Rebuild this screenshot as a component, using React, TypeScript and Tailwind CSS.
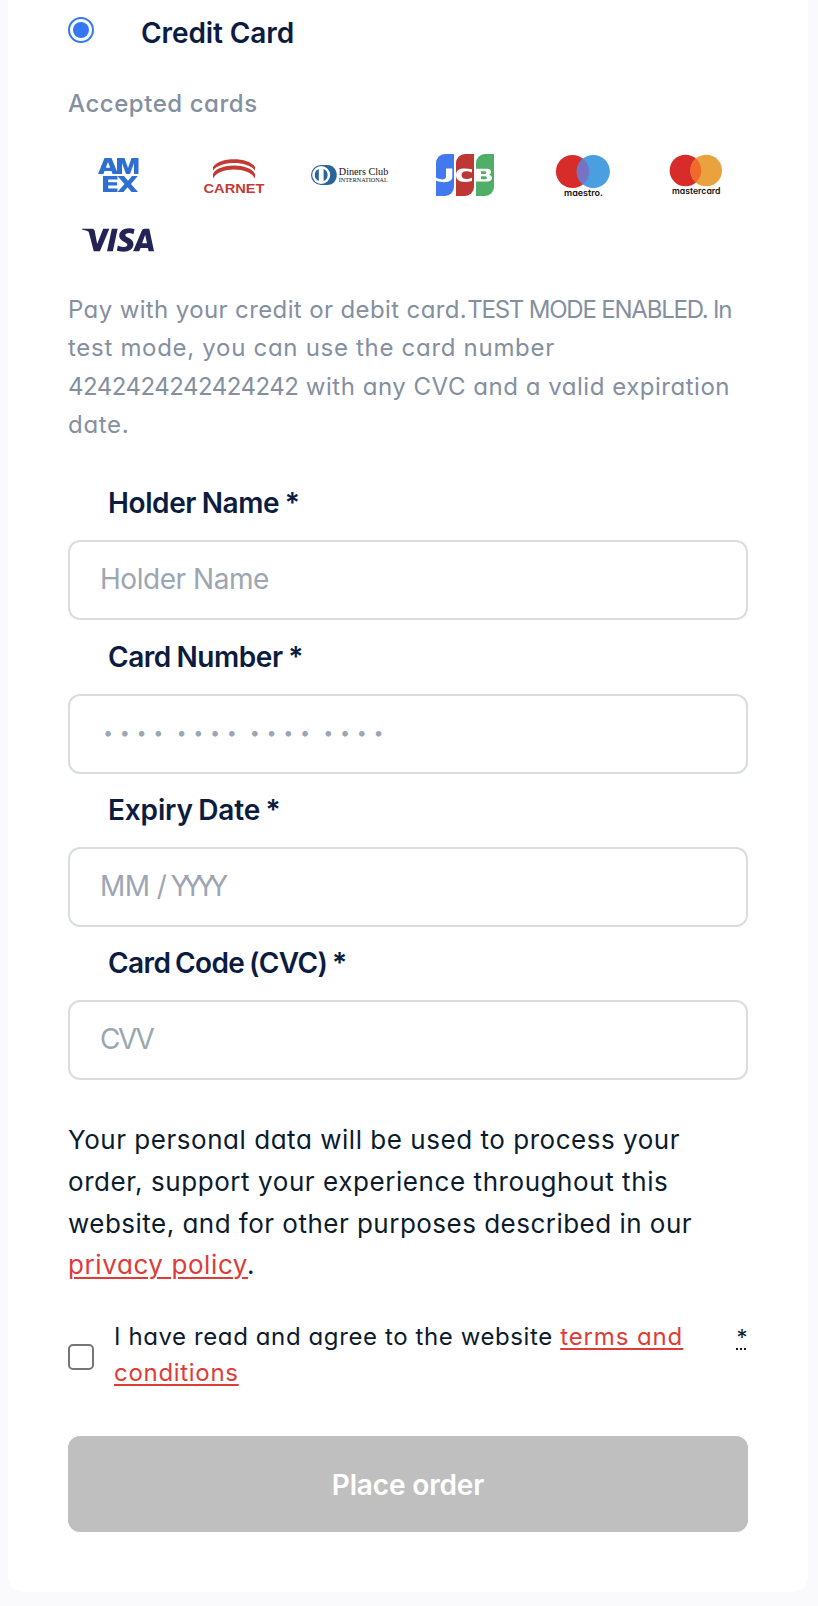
import type { ReactNode } from "react";
import { SiVisa } from "react-icons/si";

function Amex() {
  return (
    <svg viewBox="0 0 100 64" className="h-16 w-full" fill="#2f6fd0">
      <path fillRule="evenodd" d="M30 31 L36.500 15 H43.500 L49 28.500 V15 H56.500 L60 25 L63.500 15 H70.500 V31 H66 V20 L62 31 H58 L54 20 V31 H44.500 L43.500 28 H36.500 L35.500 31Z M37.800 24.800 H42.200 L40 19Z" />
      <path d="M35 33 H49.500 V36.500 H40.200 V39.200 H49 V42.500 H40.200 V45.500 H49.500 V49 H35Z" />
      <path d="M49.500 33 H56 L60 37.800 L64 33 H69.800 L63 41 L70 49 H63.500 L59.500 44.300 L55.500 49 H49.500 L56.500 41Z" />
    </svg>
  );
}

function Carnet() {
  return (
    <svg viewBox="0 0 100 64" className="h-16 w-full font-['Liberation_Sans'] font-bold" fill="#c33a33">
      <path d="M29 27.500 V24 C35 13.500 65 13.500 71 24 V27.500 C64 17.500 36 17.500 29 27.500Z" />
      <path d="M29 35.500 V31 C34 19.500 66 19.500 71 31 V35.500 C65 23.500 35 23.500 29 35.500Z" />
      <text x="19.500" y="50" fontSize="12.600" textLength="61" lengthAdjust="spacingAndGlyphs">CARNET</text>
    </svg>
  );
}

function Diners() {
  return (
    <svg viewBox="0 0 100 64" className="h-16 w-full font-['Liberation_Serif']" fill="#111">
      <path d="M21 22 H27 C40 22 40 42 27 42 H21 A10 10 0 0 1 21 22Z" fill="#2a6499" />
      <circle cx="21.200" cy="32" r="9" fill="#fff" />
      <path d="M18.800 26 V38 A6.500 6.500 0 0 1 18.800 26Z M23.600 26 A6.500 6.500 0 0 1 23.600 38Z" fill="#2a6499" />
      <text x="38.800" y="32.400" fontSize="11" textLength="49.500" lengthAdjust="spacingAndGlyphs">Diners Club</text>
      <text x="38.800" y="38.500" fontSize="6.200" textLength="49" lengthAdjust="spacingAndGlyphs">INTERNATIONAL</text>
    </svg>
  );
}

function Jcb() {
  return (
    <svg viewBox="0 0 100 64" className="h-16 w-full">
      <path d="M29 11 H38 V44 A9 9 0 0 1 29 53 H20 V20 A9 9 0 0 1 29 11Z" fill="#4279ee" />
      <path d="M49 11 H58 V44 A9 9 0 0 1 49 53 H40 V20 A9 9 0 0 1 49 11Z" fill="#bd3734" />
      <path d="M69 11 H78 V44 A9 9 0 0 1 69 53 H60 V20 A9 9 0 0 1 69 11Z" fill="#50af67" />
      <path d="M30 25.500 H36.300 V34 C36.300 40.500 25 39.700 20 37.800 V34.800 C25 36.800 30 37.500 30 33.500Z" fill="#fff" />
      <path d="M56 26.200 V29.500 C50 27 45.500 28 45.500 32 C45.500 36.200 50 37 56 34.700 V38 C47 40 40 39 40 32 C40 25 47 24.500 56 26.200Z" fill="#fff" />
      <path fillRule="evenodd" d="M60 25.700 H71 C76 25.700 76.300 30.700 72.600 31.800 C77.500 32.500 77 38.600 71.500 38.600 H60Z M65 28.200 V30.900 H69 C70.800 30.900 70.800 28.200 69 28.200Z M65 33.200 V36.200 H69.500 C71.500 36.200 71.500 33.200 69.500 33.200Z" fill="#fff" />
    </svg>
  );
}

function Maestro() {
  return (
    <svg viewBox="0 0 100 64" className="h-16 w-full font-['Inter'] font-semibold [font-feature-settings:'cv11']">
      <circle cx="40.500" cy="28.500" r="16.600" fill="#d82c2b" />
      <circle cx="61.300" cy="28.500" r="16.600" fill="#4a9fe0" />
      <path d="M50.900 15.560 A16.600 16.600 0 0 1 50.900 41.440 A16.600 16.600 0 0 1 50.900 15.560Z" fill="#7673c4" />
      <text x="32" y="53.300" fontSize="9" textLength="39" lengthAdjust="spacingAndGlyphs" fill="#111">maestro.</text>
    </svg>
  );
}

function Mastercard() {
  return (
    <svg viewBox="0 0 100 64" className="h-16 w-full font-['Inter'] font-semibold [font-feature-settings:'cv11']">
      <circle cx="37.500" cy="27.500" r="15.800" fill="#d82c2b" />
      <circle cx="58.200" cy="27.500" r="15.800" fill="#eaa23f" />
      <path d="M47.850 15.560 A15.800 15.800 0 0 1 47.850 39.440 A15.800 15.800 0 0 1 47.850 15.560Z" fill="#f06a2c" />
      <text x="24" y="51.300" fontSize="8.400" textLength="48.500" lengthAdjust="spacingAndGlyphs" fill="#111">mastercard</text>
    </svg>
  );
}

function Field({ label, name, tracking, children }: { label: string; name: string; tracking: string; children: ReactNode }) {
  return (
    <div className="flex flex-col pb-[15.33px]">
      <label htmlFor={name} className={`mb-4 pl-10 text-[28px] leading-[42px] font-semibold text-[#0b1c40] ${tracking}`}>
        {label}
      </label>
      <div className="grid h-20">
        <input
          id={name}
          className="[grid-area:1/1] h-20 w-full rounded-xl border-2 border-[#d9dde3] bg-white px-8 text-[28px] text-[#0b1c40] outline-none"
        />
        <span className="pointer-events-none [grid-area:1/1] pl-8 text-[28px] leading-[79px] whitespace-pre text-[#9ca6b3]">{children}</span>
      </div>
    </div>
  );
}

export default function App() {
  return (
    <div className="h-[1606px] overflow-hidden bg-[#fafafc] px-2 pr-[10px] font-['Inter',sans-serif]">
      <main className="flex h-[1592px] flex-col rounded-b-2xl bg-white px-[60px] pt-3">
        <div className="flex h-[42px] shrink-0">
          <span role="radio" aria-checked="true" className="mt-[5px] flex size-[26px] items-center justify-center rounded-full border-2 border-[#3478f6]">
            <span className="size-4 rounded-full bg-[#3478f6]" />
          </span>
          <span className="ml-[47px] text-[28px] leading-[42px] font-semibold tracking-[-0.1px] text-[#0b1c40]">Credit Card</span>
        </div>

        <p className="mt-8 text-[24px] leading-9 font-medium tracking-[0.55px] text-[#848f9f] [font-feature-settings:'cv11']">Accepted cards</p>

        <div className="mt-[21px] grid grid-cols-6 gap-x-4">
          <Amex />
          <Carnet />
          <Diners />
          <Jcb />
          <Maestro />
          <Mastercard />
          <div className="flex h-16 items-center justify-center pt-px pr-px">
            <SiVisa className="size-[72px] text-[#232355]" />
          </div>
        </div>

        <p className="mt-5 text-[24px] leading-[38.4px] whitespace-nowrap text-[#848f9f] [font-feature-settings:'cv11']">
          <span className="tracking-[0.38px]">Pay with your credit or debit card.</span>
          <span className="tracking-[-1.2px]">TEST MODE ENABLED. In</span>
          <br />
          <span className="tracking-[0.7px]">test mode, you can use the card number</span>
          <br />
          <span className="tracking-[-0.5px]">4242424242424242</span>
          <span className="tracking-[0.53px]"> with any CVC and a valid expiration</span>
          <br />
          <span className="tracking-[0.7px]">date.</span>
        </p>

        <div className="mt-[37.700px] flex flex-col">
          <Field label="Holder Name *" name="holder" tracking="tracking-[-0.4px] [word-spacing:-1px]">
            <span className="tracking-[-0.45px]">Holder Name</span>
          </Field>
          <Field label="Card Number *" name="number" tracking="tracking-[-0.45px] [word-spacing:-1px]">
            <span className="ml-[3px] inline-block -translate-y-1 text-[18px] tracking-[6.63px] [word-spacing:-5.3px]">•••• •••• •••• ••••</span>
          </Field>
          <Field label="Expiry Date *" name="expiry" tracking="tracking-[-0.15px] [word-spacing:-1.5px]">
            <span className="tracking-[-0.6px]">MM / </span>
            <span className="-ml-[3px] tracking-[-6.1px]">YYYY</span>
          </Field>
          <Field label="Card Code (CVC) *" name="cvc" tracking="tracking-[-0.6px] [word-spacing:-1.8px]">
            <span className="tracking-[-2.4px]">CVV</span>
          </Field>
        </div>

        <p className="mt-[23.700px] text-[26px] leading-[41.6px] whitespace-nowrap text-[#0c1b2c] [font-feature-settings:'cv11']">
          <span className="tracking-[0.53px]">Your personal data will be used to process your</span>
          <br />
          <span className="tracking-[0.57px]">order, support your experience throughout this</span>
          <br />
          <span className="tracking-[0.48px]">website, and for other purposes described in our</span>
          <br />
          <a href="#privacy" className="tracking-[0.59px] text-[#df3b37] underline decoration-2 underline-offset-[3px]">privacy policy</a>
          <span className="-ml-px">.</span>
        </p>

        <div className="mt-[33.500px] flex text-[24px] leading-9 text-[#0c1b2c] [font-feature-settings:'cv11']">
          <span role="checkbox" aria-checked="false" className="mt-[25px] size-[26px] shrink-0 rounded-[5px] border-2 border-[#767676] bg-white" />
          <span className="ml-5 grow whitespace-nowrap">
            <span className="tracking-[0.6px]">I have read and agree to the website </span>
            <a href="#terms" className="text-[#df3b37] underline decoration-2 underline-offset-[3px]">
              <span className="tracking-[0.88px]">terms and</span>
              <br />
              <span className="tracking-[0.7px]">conditions</span>
            </a>
          </span>
          <abbr title="required" className="h-[30px] w-3 shrink-0 text-center text-[22px] underline decoration-dotted decoration-2 underline-offset-[3px]">*</abbr>
        </div>

        <button className="mt-[45px] h-24 w-full shrink-0 rounded-xl bg-[#bfbfbf] pt-px text-[28px] font-semibold tracking-[-0.15px] text-white">Place order</button>
      </main>
    </div>
  );
}
